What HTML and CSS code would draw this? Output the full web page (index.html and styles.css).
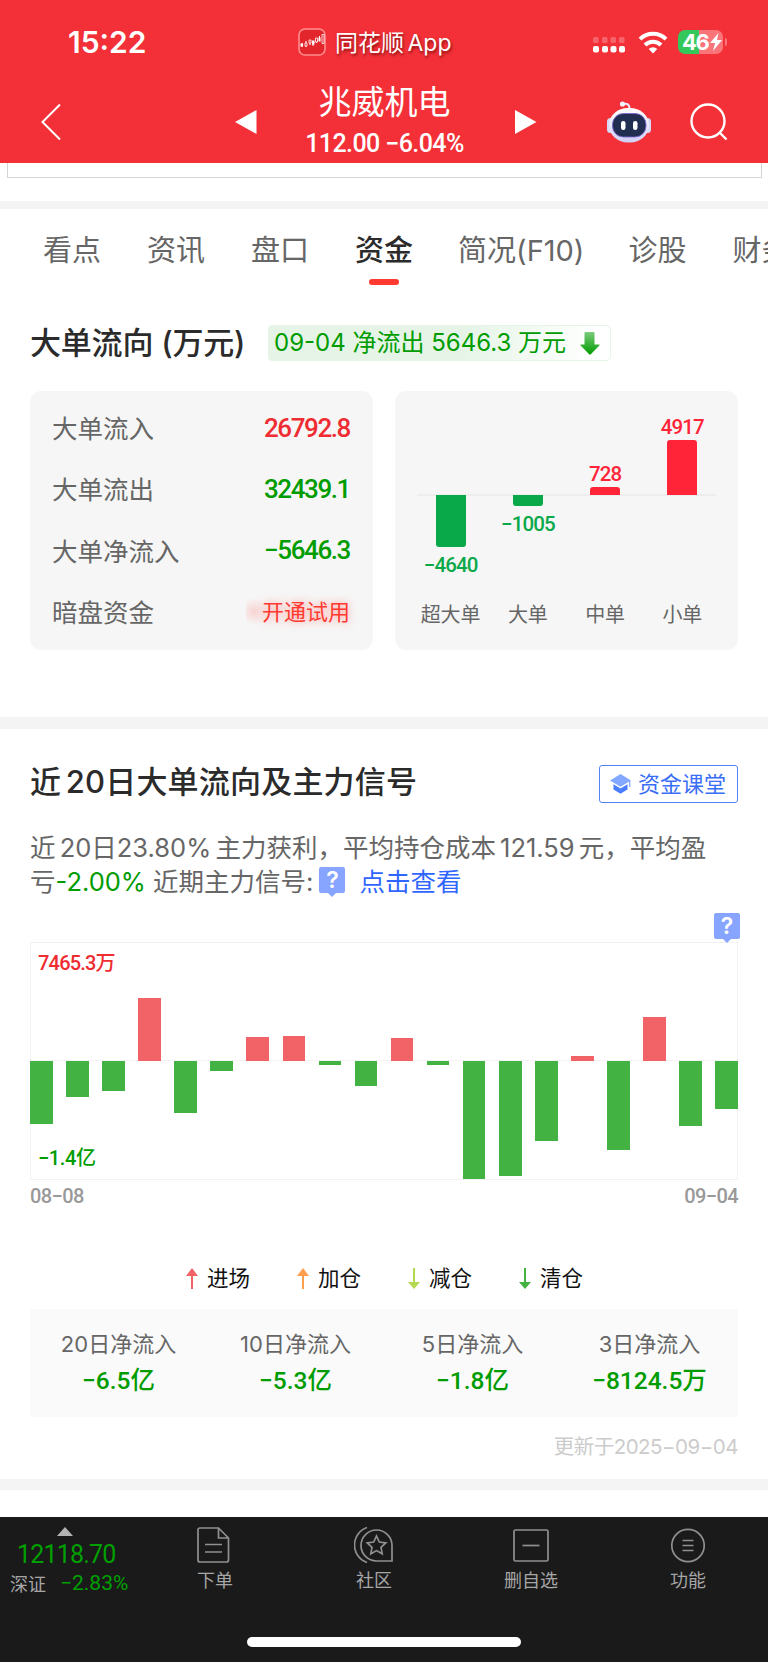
FILE: index.html
```html
<!DOCTYPE html>
<html lang="zh-CN">
<head>
    <meta charset="UTF-8">
    <title>兆威机电</title>
    <link rel="stylesheet" href="styles.css">
</head>
<body>
    <header class="header">
        <div class="status">
            <span class="time">15:22</span>
            <div class="island">
                <svg width="28" height="28" viewBox="0 0 28 28">
                    <rect x="1" y="1" width="26" height="26" rx="6" fill="#e3262c" stroke="#ff8d90" stroke-width="1.6"/>
                    <path d="M4 15v4M8 13v6M12 12v5M15 13v5M18.500 10v5M21.500 8v5" stroke="#fff" stroke-width="1"/>
                    <path d="M2.500 15.500h2.500v3H2.500zM14 12.500h2.500v4H14zM20.500 9.500h2v4h-2z" fill="#fff"/>
                    <path d="M7 15h2v3H7zM11 12h2v3h-2zM17.500 10h2v4h-2zM24 6.500h2v9h-2z" fill="#e3262c" stroke="#fff" stroke-width=".8"/>
                </svg>
                <span class="app-name">同花顺 App</span>
            </div>
            <div class="status-icons">
                <svg width="33" height="16" viewBox="0 0 33 16" fill="#fff">
                    <g opacity=".25"><rect x="0" y="0" width="5.500" height="6" rx="1.500"/><rect x="9" y="0" width="5.500" height="6" rx="1.500"/><rect x="17.500" y="0" width="5.500" height="6" rx="1.500"/><rect x="26" y="0" width="5.500" height="6" rx="1.500"/></g>
                    <rect x="0" y="9" width="6" height="6.500" rx="2"/><rect x="9" y="9" width="6" height="6.500" rx="2"/><rect x="17.500" y="9" width="6" height="6.500" rx="2"/><rect x="26" y="9" width="6" height="6.500" rx="2"/>
                </svg>
                <svg class="wifi" width="30" height="23" viewBox="0 0 30 23" fill="none" stroke="#fff" stroke-width="4">
                    <path d="M2 8.200a18.500 18.500 0 0 1 26 0"/>
                    <path d="M7 14a11.300 11.300 0 0 1 16 0"/>
                    <path d="M15 22.500l-4.300-4.400a6.200 6.200 0 0 1 8.600 0z" fill="#fff" stroke="none"/>
                </svg>
                <div class="battery"><span>46</span><svg width="12" height="18" viewBox="0 0 12 18"><path d="M8.500 0L0 10h5L3 18l9-11H7z" fill="#fff"/></svg></div>
                <i class="battery-tip"></i>
            </div>
        </div>
        <div class="nav">
            <svg class="back" width="20" height="38" viewBox="0 0 20 38"><path d="M19 1.500L1.500 19 19 36.500" fill="none" stroke="#fff" stroke-width="2"/></svg>
            <svg class="prev" width="22" height="24" viewBox="0 0 22 24"><path d="M21.500 0v24L0 12z" fill="#fff"/></svg>
            <div class="stock">
                <div class="stock-name">兆威机电</div>
                <div class="stock-price num">112.00 −6.04%</div>
            </div>
            <svg class="next" width="22" height="24" viewBox="0 0 22 24"><path d="M0 0v24l21.500-12z" fill="#fff"/></svg>
            <svg class="robot" width="46" height="42" viewBox="0 0 46 42">
                <defs>
                    <linearGradient id="shell" x1="0" y1="0" x2="0" y2="1"><stop offset="0" stop-color="#fff"/><stop offset="1" stop-color="#d0cff5"/></linearGradient>
                </defs>
                <path d="M17 3c5-1 6.500 1 6.500 5" fill="none" stroke="#e9e9fa" stroke-width="2"/>
                <circle cx="16.500" cy="3" r="2.600" fill="#f4f4ff"/>
                <rect x="1" y="17" width="7" height="15" rx="3.500" fill="#d5d9f5"/>
                <rect x="38" y="17" width="7" height="15" rx="3.500" fill="#d5d9f5"/>
                <rect x="3" y="7" width="40" height="34.500" rx="19" ry="17" fill="url(#shell)"/>
                <rect x="6.500" y="12.500" width="33.500" height="23.500" rx="11" fill="#222d52" stroke="#7a68d0" stroke-width=".9"/>
                <rect x="15" y="20" width="4.500" height="9" rx="2.200" fill="#fff"/>
                <rect x="27" y="20" width="4.500" height="9" rx="2.200" fill="#fff"/>
            </svg>
            <svg class="search" width="38" height="38" viewBox="0 0 38 38" fill="none" stroke="#fff" stroke-width="2.400"><circle cx="18" cy="18" r="16.500"/><path d="M29.500 29.500l7 7"/></svg>
        </div>
    </header>

    <div class="prev-card"><i></i></div>

    <nav class="tabs">
        <span>看点</span>
        <span>资讯</span>
        <span>盘口</span>
        <span class="active">资金</span>
        <span class="profile">简况(F10)</span>
        <span>诊股</span>
        <span>财务</span>
    </nav>

    <section class="flow">
        <div class="flow-head">
            <h2>大单流向 (万元)</h2>
            <div class="flow-tag">
                <span>09-04 净流出 5646.3 万元</span>
                <svg width="20" height="23" viewBox="0 0 20 23">
                    <defs><linearGradient id="down" x1="0" y1="0" x2="0" y2="1"><stop offset="0" stop-color="#7ccb7c"/><stop offset="1" stop-color="#009c00"/></linearGradient></defs>
                    <path d="M4.500 1q0-1 1-1h8q1 0 1 1v11.500H19q1 0 .4 1l-8.600 8.800q-.8.700-1.600 0L.6 13.500q-.6-1 .4-1h3.500z" fill="url(#down)"/>
                </svg>
            </div>
        </div>
        <div class="flow-cards">
            <div class="card flow-list">
                <div class="row"><span>大单流入</span><b class="num red">26792.8</b></div>
                <div class="row"><span>大单流出</span><b class="num green">32439.1</b></div>
                <div class="row"><span>大单净流入</span><b class="num green">−5646.3</b></div>
                <div class="row"><span>暗盘资金</span><span class="trial">开通试用</span></div>
            </div>
            <div class="card order-chart">
                <div class="order-plot">
                    <div class="order neg"><i style="height:52px"></i><span class="num">−4640</span></div>
                    <div class="order neg"><i style="height:11px"></i><span class="num">−1005</span></div>
                    <div class="order pos"><span class="num">728</span><i style="height:8px"></i></div>
                    <div class="order pos"><span class="num">4917</span><i style="height:55px"></i></div>
                </div>
                <div class="order-labels"><span>超大单</span><span>大单</span><span>中单</span><span>小单</span></div>
            </div>
        </div>
    </section>

    <section class="signal">
        <div class="signal-head">
            <h2>近 20日大单流向及主力信号</h2>
            <div class="course">
                <svg width="21" height="20" viewBox="0 0 21 20">
                    <path d="M10.500 0L21 6.500l-10.500 6.300L0 6.500z" fill="#84a8ff"/>
                    <path d="M3.500 10.200l7 4.200 7-4.200v5.300l-7 4.300-7-4.300z" fill="#4a7dff"/>
                    <path d="M19.700 7v6" stroke="#84a8ff" stroke-width="1.300"/>
                </svg>
                <span>资金课堂</span>
            </div>
        </div>
        <p class="desc"><span class="line line-first">近 20日23.80% 主力获利，平均持仓成本 121.59 元，平均盈</span><span class="line">亏<em>-2.00%</em> 近期主力信号:<i class="help">?</i><a>点击查看</a></span></p>
        <div class="history">
            <i class="help chart-help">?</i>
            <span class="max num">7465.3万</span>
            <div class="bars" id="bars"></div>
            <span class="min num">−1.4亿</span>
        </div>
        <div class="dates num"><span>08−08</span><span>09−04</span></div>
        <div class="legend">
            <span><svg width="12" height="21" viewBox="0 0 12 21" fill="#f26367"><path d="M6 0l6 8H7V21H5V8H0z"/></svg>进场</span>
            <span><svg width="12" height="21" viewBox="0 0 12 21" fill="#ff9f4d"><path d="M6 0l6 8H7V21H5V8H0z"/></svg>加仓</span>
            <span><svg width="12" height="21" viewBox="0 0 12 21" fill="#b4d850"><path d="M6 21l6-7H7V0H5v14H0z"/></svg>减仓</span>
            <span><svg width="12" height="21" viewBox="0 0 12 21" fill="#42b342"><path d="M6 21l6-7H7V0H5v14H0z"/></svg>清仓</span>
        </div>
        <div class="summary">
            <div><span>20日净流入</span><b class="num">−6.5亿</b></div>
            <div><span>10日净流入</span><b class="num">−5.3亿</b></div>
            <div><span>5日净流入</span><b class="num">−1.8亿</b></div>
            <div><span>3日净流入</span><b class="num">−8124.5万</b></div>
        </div>
        <div class="updated">更新于2025−09−04</div>
    </section>

    <footer class="footer">
        <div class="toolbar">
            <div class="index">
                <i class="caret"></i>
                <div class="index-value num">12118.70</div>
                <div class="index-row"><span>深证</span><span class="num">−2.83%</span></div>
            </div>
            <div class="tool tool-order">
                <svg width="36" height="38" viewBox="0 0 36 38"><path d="M4 2h18.500L32.500 12v22q0 2-2 2H4q-2 0-2-2V4q0-2 2-2zM22.500 2v10h10M9 18.500h17M9 26h17"/></svg>
                <span>下单</span>
            </div>
            <div class="tool tool-community">
                <svg width="40" height="38" viewBox="0 0 40 38"><path d="M13 1.500a18.500 18.500 0 0 0 0 35M22.500 4A15.500 15.500 0 0 0 22.500 35H38V19.500A15.500 15.500 0 0 0 22.500 4z"/><path d="M22.500 10l2.800 6 6.500.8-4.800 4.500 1.200 6.500-5.700-3.200-5.700 3.200 1.200-6.500-4.800-4.500 6.500-.8z"/></svg>
                <span>社区</span>
            </div>
            <div class="tool tool-remove">
                <svg width="36" height="38" viewBox="0 0 36 38"><rect x="1" y="4" width="34" height="31" rx="1.500"/><path d="M9.500 19.500h17"/></svg>
                <span>删自选</span>
            </div>
            <div class="tool tool-more">
                <svg width="36" height="38" viewBox="0 0 36 38"><circle cx="18" cy="19.500" r="16.200"/><path d="M12.500 14.500h11M12.500 19.500h11M12.500 24.500h11"/></svg>
                <span>功能</span>
            </div>
        </div>
        <div class="home-bar"></div>
    </footer>

    <script>
        // 近20日大单净流入，正数向上，负数向下
        const flows = [-63, -36, -30, 63.5, -51.5, -10, 24, 25.5, -4, -24.5, 23.5, -3.5, -118, -114.5, -80, 5, -89, 44, -65, -48];
        const bars = document.getElementById('bars');
        flows.forEach(value => {
            const bar = document.createElement('i');
            bar.className = value > 0 ? 'up' : 'down';
            bar.style.height = Math.abs(value) + 'px';
            bars.appendChild(bar);
        });
    </script>
</body>
</html>
```
FILE: styles.css
```css
* {
    box-sizing: border-box;
}
body {
    margin: 0;
    width: 768px;
    height: 1663px;
    overflow: hidden;
    background: #fff;
    color: #666;
    font-family: Inter, "Noto Sans CJK SC", sans-serif;
    white-space: nowrap;
}
svg {
    display: block;
    flex: none;
}
i, em {
    font-style: normal;
}
h2 {
    margin: 0;
    color: #2b2b2b;
    font-weight: 500;
}
.num {
    font-family: Roboto, "Noto Sans CJK SC", sans-serif;
    font-weight: 500;
}
.red {
    color: #ee2c32;
}
.green {
    color: #009c00;
}

/* header */
.header {
    height: 163px;
    background: #f33038;
    color: #fff;
}
.status {
    display: flex;
    align-items: center;
    height: 84px;
    padding-left: 68px;
}
.time {
    width: 230px;
    font-size: 30px;
    font-weight: 600;
}
.island {
    display: flex;
    align-items: center;
    gap: 9px;
    width: 295px;
}
.app-name {
    padding-bottom: 3px;
    font-size: 23px;
    word-spacing: -3px;
    text-shadow: 1px 2px 3px rgba(90, 0, 0, 0.7);
}
.status-icons {
    display: flex;
    align-items: center;
}
.status-icons > svg:first-child {
    margin-top: 5px;
}
.wifi {
    margin-left: 12px;
}
.battery {
    display: flex;
    align-items: center;
    width: 45px;
    height: 24px;
    margin-left: 10px;
    padding-left: 4px;
    border-radius: 7px;
    background: linear-gradient(90deg, #34c759 21px, #f9757a 21px);
    font-size: 22px;
    font-weight: 700;
    letter-spacing: -1.5px;
}
.battery svg {
    margin-left: 2px;
}
.battery-tip {
    width: 2px;
    height: 8px;
    margin-left: 2px;
    border-radius: 0 2px 2px 0;
    background: #f9757a;
}
.nav {
    display: flex;
    align-items: center;
    height: 76px;
    padding-left: 41px;
}
.prev {
    margin-left: 174px;
}
.stock {
    width: 258px;
    padding-right: 3px;
    text-align: center;
}
.stock-name {
    height: 45px;
    font-size: 33px;
    line-height: 36px;
}
.stock-price {
    height: 31px;
    font-size: 25px;
    line-height: 30px;
    letter-spacing: -0.6px;
}
.robot {
    margin-left: 69px;
}
.search {
    margin-left: 38px;
}

.prev-card {
    height: 46px;
    padding: 0 6px 0 7px;
    border-bottom: 8px solid #f4f4f4;
}
.prev-card i {
    display: block;
    height: 15px;
    border: 1px solid #d4d4d4;
    border-top: 0;
}

/* tabs */
.tabs {
    display: flex;
    gap: 46px;
    height: 92px;
    padding: 21px 0 0 43px;
    overflow: hidden;
    font-size: 29px;
    line-height: 42px;
}
.tabs span {
    flex: none;
}
.tabs .profile {
    margin: 0 -2px 0 -1px;
}
.tabs .active {
    color: #2b2b2b;
    font-weight: 500;
}
.tabs .active::after {
    content: "";
    display: block;
    width: 30px;
    height: 6px;
    margin: 7px auto 0;
    border-radius: 3px;
    background: #ff3a30;
}

/* flow */
.flow {
    height: 428px;
    padding: 24px 30px 0;
    border-bottom: 12px solid #f4f4f4;
}
.flow-head {
    display: flex;
    align-items: center;
    height: 36px;
}
.flow-head h2 {
    width: 238px;
    padding-bottom: 5px;
    font-size: 31px;
    letter-spacing: -0.2px;
}
.flow-tag {
    display: flex;
    align-items: center;
    justify-content: space-between;
    width: 343px;
    height: 36px;
    padding: 0 10px 0 5px;
    border: 1px solid #e4f5e7;
    border-radius: 4px;
    background: linear-gradient(100deg, #e5f4e6 55%, #fff 95%);
    color: #009c00;
    font-size: 24px;
}
.flow-tag span {
    padding-bottom: 5px;
}
.flow-cards {
    display: flex;
    gap: 22px;
    margin-top: 30px;
}
.card {
    width: 343px;
    height: 259px;
    border-radius: 11px;
    background: #f6f6f6;
}
.flow-list {
    padding: 6px 23px 0 22px;
}
.row {
    display: flex;
    align-items: center;
    justify-content: space-between;
    height: 61.3px;
    font-size: 25.5px;
}
.row span {
    padding-bottom: 2px;
}
.row b {
    font-size: 26px;
    letter-spacing: -1.4px;
}
.row .trial {
    padding: 0 0 3px 16px;
    background: radial-gradient(circle at 8px 50%, rgba(255, 60, 50, 0.18), transparent 14px);
    color: #ff3a30;
    font-size: 22px;
    text-shadow: 0 0 9px rgba(255, 60, 50, 0.5);
}
.order-plot {
    display: flex;
    height: 208px;
    padding: 0 17px;
    background: linear-gradient(#ededed, #ededed) 22px 103px / 299px 2px no-repeat;
}
.order {
    display: flex;
    flex: 1;
    flex-direction: column;
    align-items: center;
    height: 104px;
    font-size: 20.5px;
    line-height: 24px;
    letter-spacing: -0.9px;
}
.order i {
    width: 30px;
    background: currentColor;
}
.pos {
    justify-content: flex-end;
    color: #ff2438;
}
.pos span {
    margin-bottom: 1px;
}
.pos i {
    border-radius: 3px 3px 0 0;
}
.neg {
    margin-top: 104px;
    color: #09a94a;
}
.neg span {
    margin-top: 6px;
}
.neg i {
    border-radius: 0 0 3px 3px;
}
.order-labels {
    display: flex;
    padding: 1px 17px 0;
    font-size: 20px;
    line-height: 31px;
    text-align: center;
}
.order-labels span {
    flex: 1;
}

/* signal */
.signal {
    height: 761px;
    padding: 36px 30px 0;
    border-bottom: 11px solid #f4f4f4;
}
.signal-head {
    display: flex;
    align-items: center;
    justify-content: space-between;
    height: 38px;
}
.signal-head h2 {
    padding-bottom: 9px;
    font-size: 31px;
    letter-spacing: 0.2px;
    word-spacing: -4px;
}
.course {
    display: flex;
    align-items: center;
    gap: 7px;
    width: 139px;
    height: 38px;
    padding-left: 10px;
    border: 1.5px solid #5583f7;
    border-radius: 3px;
    color: #3b6ef6;
    font-size: 22px;
}
.course span {
    padding-bottom: 4px;
}
.desc {
    height: 68px;
    margin: 28px 0 0;
    font-size: 25.5px;
}
.line {
    display: flex;
    align-items: center;
    height: 34px;
    line-height: 34px;
    white-space: pre;
}
.line-first {
    word-spacing: -3px;
}
.desc em {
    color: #009c00;
}
.desc a {
    margin-left: 14px;
    color: #2f66ff;
}
.help {
    position: relative;
    width: 26px;
    height: 26px;
    border-radius: 2px;
    background: #87a4ff;
    color: #fff;
    font-size: 23px;
    font-weight: 600;
    line-height: 27px;
    text-align: center;
}
.help::after {
    content: "";
    position: absolute;
    left: 9px;
    top: 26px;
    border: 4px solid transparent;
    border-top-color: #87a4ff;
    border-bottom: 0;
}
.desc .help {
    margin: 0 0 5px 6px;
}
.history {
    position: relative;
    height: 238px;
    margin-top: 43px;
    border: 1px solid #f2f2f2;
}
.chart-help {
    position: absolute;
    right: -3px;
    top: -30px;
}
.max, .min {
    position: absolute;
    left: 7px;
    font-size: 20px;
    line-height: 24px;
    letter-spacing: -0.8px;
}
.max {
    top: 8px;
    color: #ee2c32;
}
.min {
    bottom: 9px;
    color: #009c00;
    letter-spacing: -0.4px;
}
.bars {
    display: flex;
    justify-content: space-between;
    height: 236px;
    margin: 0 -1px;
    background: linear-gradient(#f4f4f4, #f4f4f4) 0 117px / 100% 1px no-repeat;
}
.bars i {
    width: 22.5px;
}
.up {
    align-self: flex-end;
    margin-bottom: 118px;
    background: #f26367;
}
.down {
    margin-top: 118px;
    background: #42b342;
}
.dates {
    display: flex;
    justify-content: space-between;
    height: 33px;
    color: #999;
    font-size: 20px;
    line-height: 33px;
    letter-spacing: -0.6px;
}
.legend {
    display: flex;
    gap: 47px;
    height: 96px;
    padding: 50px 0 0 156px;
    color: #111;
    font-size: 21.5px;
    line-height: 30px;
}
.legend span {
    display: flex;
    align-items: center;
    gap: 9px;
    width: 64px;
    height: 30px;
}
.summary {
    display: flex;
    height: 108px;
    padding-top: 17px;
    background: #fafafa;
    text-align: center;
}
.summary div {
    flex: 1;
}
.summary span, .summary b {
    display: block;
    height: 37px;
    line-height: 36px;
    font-size: 22px;
}
.summary b {
    color: #009c00;
    font-size: 24.5px;
}
.updated {
    height: 60px;
    color: #ccc;
    font-size: 20.5px;
    line-height: 60px;
    letter-spacing: -0.5px;
    text-align: right;
}

/* footer */
.footer {
    height: 145px;
    margin-top: 27px;
    background: #1a1a1a;
    color: #a6a6a6;
    font-size: 18px;
}
.toolbar {
    display: flex;
    height: 120px;
}
.index {
    width: 166px;
    color: #00a000;
}
.caret {
    display: block;
    width: 16px;
    margin: 10px 0 0 57px;
    border: 8px solid transparent;
    border-bottom: 9px solid #b4b4b4;
    border-top: 0;
}
.index-value {
    margin: 6px 0 0 17px;
    font-size: 25px;
    font-weight: 400;
    line-height: 26px;
    letter-spacing: -0.8px;
}
.index-row {
    display: flex;
    align-items: center;
    gap: 14px;
    height: 29px;
    margin: 0 0 0 10px;
}
.index-row span:first-child {
    color: #a6a6a6;
}
.index-row .num {
    font-size: 21px;
    font-weight: 400;
}
.tool {
    display: flex;
    flex-direction: column;
    align-items: center;
    width: 98px;
    padding-top: 9px;
}
.tool svg {
    fill: none;
    stroke: #909090;
    stroke-width: 1.7;
}
.tool-order svg {
    margin-right: 3px;
}
.tool span {
    margin-top: 3px;
    line-height: 28px;
}
.tool-community {
    margin-left: 61px;
}
.tool-remove {
    margin-left: 59px;
}
.tool-more {
    margin-left: 59px;
}
.home-bar {
    width: 274px;
    height: 10px;
    margin-left: 247px;
    border-radius: 5px;
    background: #fff;
}
```
